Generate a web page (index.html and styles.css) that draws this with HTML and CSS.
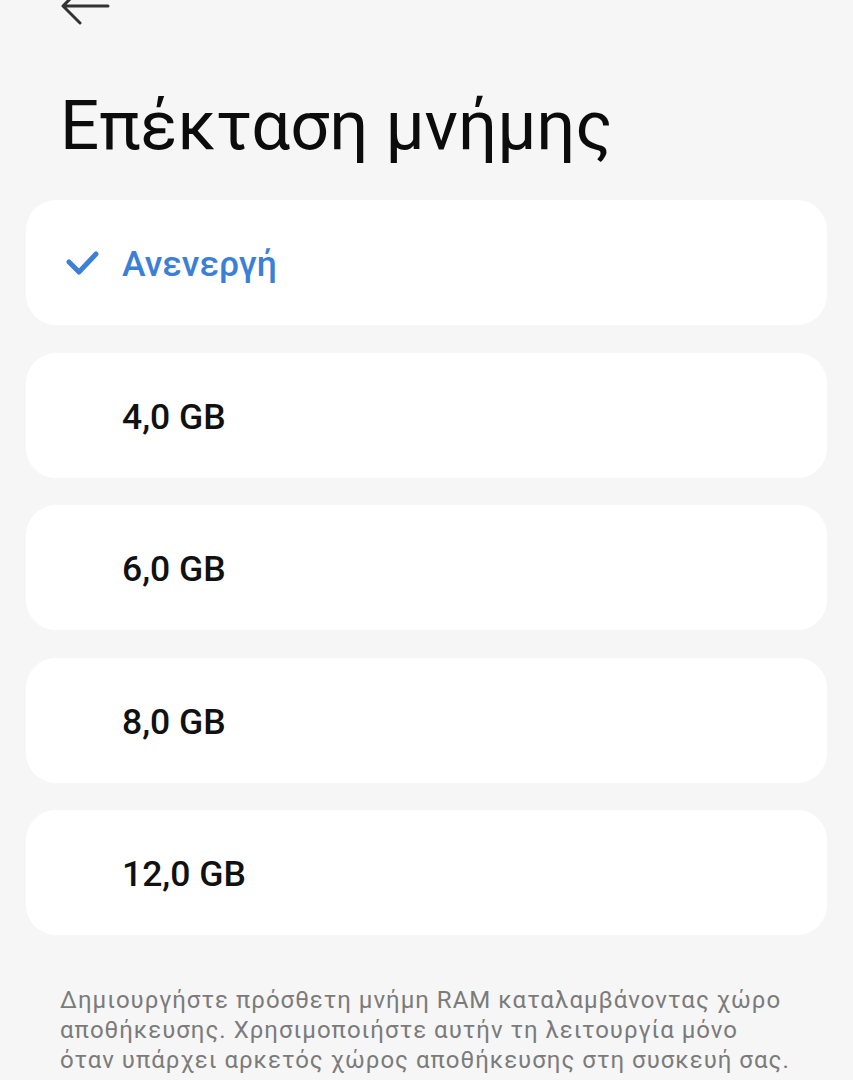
FILE: index.html
```html
<!DOCTYPE html>
<html lang="el">

<head>
    <meta charset="UTF-8">
    <meta name="viewport" content="width=device-width, initial-scale=1.0">
    <title>Επέκταση μνήμης</title>
    <link rel="stylesheet" href="styles.css">
</head>

<body>

    <div class="top-bar">
        <svg class="back" width="50" height="26" viewBox="0 0 50 26">
            <path d="M48 6 H4 M20 -11 L3 6 L20 23" fill="none" stroke="#333" stroke-width="3"
                stroke-linecap="round" stroke-linejoin="round" />
        </svg>
    </div>

    <h1 class="title">Επέκταση μνήμης</h1>

    <ul class="options">
        <li class="option selected">
            <span class="check">
                <svg width="34" height="26" viewBox="0 0 34 26">
                    <path d="M4 12 L14 22 L31 4" fill="none" stroke="#3b80d6" stroke-width="5"
                        stroke-linecap="round" stroke-linejoin="round" />
                </svg>
            </span>
            <span class="label">Ανενεργή</span>
        </li>
        <li class="option">
            <span class="check"></span>
            <span class="label">4,0 GB</span>
        </li>
        <li class="option">
            <span class="check"></span>
            <span class="label">6,0 GB</span>
        </li>
        <li class="option">
            <span class="check"></span>
            <span class="label">8,0 GB</span>
        </li>
        <li class="option">
            <span class="check"></span>
            <span class="label">12,0 GB</span>
        </li>
    </ul>

    <p class="note">Δημιουργήστε πρόσθετη μνήμη RAM καταλαμβάνοντας χώρο αποθήκευσης. Χρησιμοποιήστε αυτήν τη λειτουργία μόνο όταν υπάρχει αρκετός χώρος αποθήκευσης στη συσκευή σας.</p>

</body>

</html>
```

FILE: styles.css
```css
* {
    margin: 0;
    padding: 0;
    list-style: none;
    box-sizing: border-box;
}

body {
    background: #f6f6f6;
    font-family: Roboto, "Noto Sans", sans-serif;
    color: #111;
    width: 853px;
    height: 1080px;
    overflow: hidden;
}

.top-bar {
    height: 26px;
    padding-left: 60px;
}

.back {
    display: block;
    overflow: visible;
}

.title {
    font-size: 69px;
    font-weight: 400;
    line-height: 1;
    margin: 65px 0 0 60px;
    color: #0c0c0c;
}

.options {
    margin: 40px 26px 0;
    display: flex;
    flex-direction: column;
    gap: 27.5px;
}

.option {
    height: 125px;
    background: #fff;
    border-radius: 30px;
    display: flex;
    align-items: center;
    padding-left: 39px;
}

.check {
    width: 57px;
    height: 26px;
    display: flex;
    align-items: center;
}

.label {
    font-size: 35.5px;
    font-weight: 500;
    color: #111;
    padding-top: 3px;
}

.option.selected .label {
    color: #3b80d6;
}

.note {
    margin: 50px 56px 0 60px;
    font-size: 24px;
    line-height: 30px;
    letter-spacing: 1px;
    color: #7b7b7b;
}
```
